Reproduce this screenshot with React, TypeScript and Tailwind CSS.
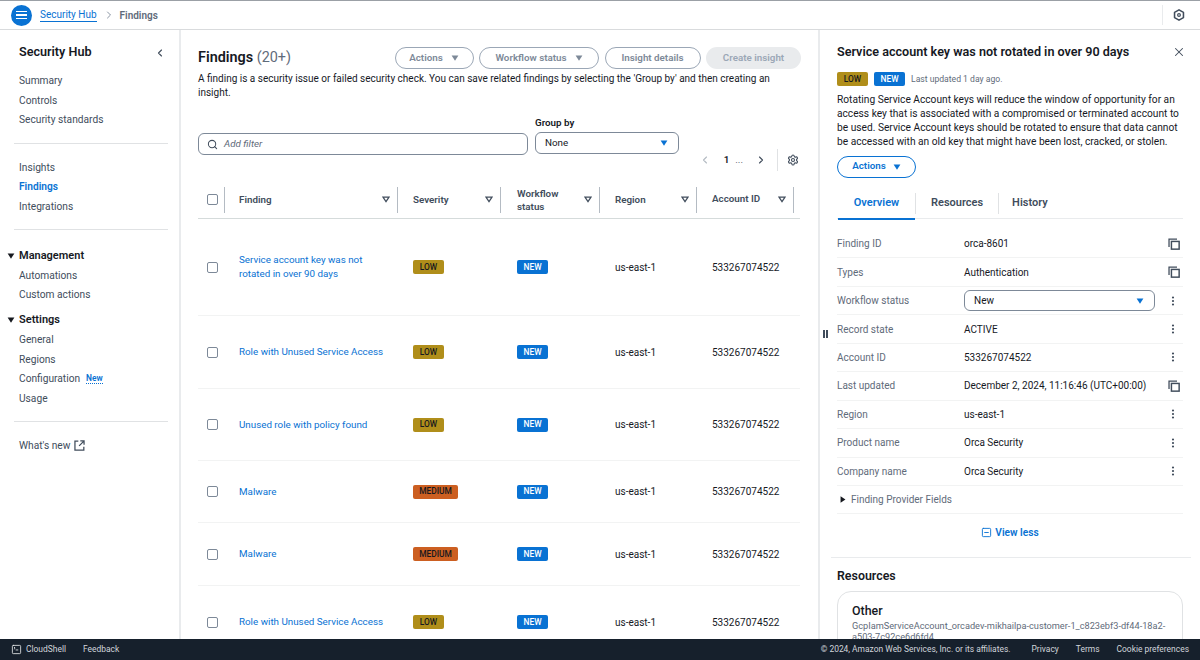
import { ChevronLeft, ChevronRight, EllipsisVertical, Search, Settings, SquareMinus, SquareTerminal, X } from 'lucide-react';

const findings = [
  { title: ['Service account key was not', 'rotated in over 90 days'], severity: 'LOW', height: 'h-[97px]' },
  { title: ['Role with Unused Service Access'], severity: 'LOW', height: 'h-[73px]' },
  { title: ['Unused role with policy found'], severity: 'LOW', height: 'h-[72px]' },
  { title: ['Malware'], severity: 'MEDIUM', height: 'h-[62px]' },
  { title: ['Malware'], severity: 'MEDIUM', height: 'h-[63px]' },
  { title: ['Role with Unused Service Access'], severity: 'LOW', height: 'h-[73px]' },
];

const details = [
  { label: 'Finding ID', value: 'orca-8601', icon: 'copy' },
  { label: 'Types', value: 'Authentication', icon: 'copy' },
  { label: 'Workflow status', value: 'select', icon: 'more' },
  { label: 'Record state', value: 'ACTIVE', icon: 'more' },
  { label: 'Account ID', value: '533267074522', icon: 'more' },
  { label: 'Last updated', value: 'December 2, 2024, 11:16:46 (UTC+00:00)', icon: 'copy' },
  { label: 'Region', value: 'us-east-1', icon: 'more' },
  { label: 'Product name', value: 'Orca Security', icon: 'more' },
  { label: 'Company name', value: 'Orca Security', icon: 'more' },
];

const grid = 'grid grid-cols-[27px_173px_103px_99px_97px_103px]';

function Caret({ className }: { className?: string }) {
  return (
    <svg viewBox="0 0 10 8" className={className} fill="currentColor">
      <path d="M0.5 0.5h9L5 7.5z" />
    </svg>
  );
}

function FilterCaret() {
  return (
    <svg viewBox="0 0 10 8" className="w-[8px] h-[7px] text-[#414d5c]" fill="none" stroke="currentColor" strokeWidth="1.6">
      <path d="M1.2 1h7.6L5 6.6z" />
    </svg>
  );
}

function CopyIcon() {
  return (
    <svg viewBox="0 0 14 14" className="w-[12px] h-[12px]" fill="none" stroke="currentColor" strokeWidth="1.5">
      <path d="M1.2 10.5V1.2h9.3" />
      <rect x="4" y="4" width="9" height="9" strokeWidth="1.7" />
    </svg>
  );
}

function ExternalIcon() {
  return (
    <svg viewBox="0 0 14 14" className="w-[11px] h-[11px]" fill="none" stroke="currentColor" strokeWidth="1.6">
      <path d="M5.5 1.5H1.2v11.3h11.3V8.5" />
      <path d="M8 1.2h4.8V6M12.6 1.4L6.5 7.5" />
    </svg>
  );
}

function NavItem({ label, active }: { label: string; active?: boolean }) {
  return (
    <div className={`h-[19.5px] flex items-center text-[10.2px] ${active ? 'text-[#0972d3] font-semibold' : 'text-[#414d5c]'}`}>
      {label}
    </div>
  );
}

function NavGroup({ label }: { label: string }) {
  return (
    <div className="h-[19.5px] flex items-center text-[11px] font-semibold text-[#16191f]">
      <Caret className="w-[8px] h-[6px] ml-[7px] mr-[4px] text-[#16191f]" />
      {label}
    </div>
  );
}

function Badge({ label }: { label: string }) {
  const colors =
    label === 'LOW'
      ? 'bg-[#b08e1a] text-[#16191f] w-[31px]'
      : label === 'MEDIUM'
        ? 'bg-[#cc5f21] text-[#16191f] w-[45px]'
        : 'bg-[#0972d3] text-white w-[31px]';
  return (
    <span className={`${colors} h-[14px] rounded-[2px] flex items-center justify-center text-[8.4px] font-medium leading-none`}>
      {label}
    </span>
  );
}

function HeaderCell({ label }: { label: string }) {
  const left = label === 'Finding' ? 'pl-[14px]' : label === 'Workflow status' ? 'pl-[16px]' : 'pl-[15px]';
  return (
    <div className={`flex items-center justify-between border-r border-[#b4bbc3] h-[26px] my-auto pr-[7px] ${left} text-[9.8px] leading-[13px] font-semibold text-[#414d5c]`}>
      <span className="w-min min-w-max">
        {label === 'Workflow status' ? (
          <>
            Workflow
            <br />
            status
          </>
        ) : (
          label
        )}
      </span>
      <FilterCaret />
    </div>
  );
}

function PillButton({ label, caret, width }: { label: string; caret?: boolean; width: string }) {
  return (
    <div className={`${width} h-[22px] rounded-full border-[1.5px] border-[#9ba7b6] flex items-center justify-center gap-[8px] text-[9.8px] font-semibold text-[#7d8998]`}>
      {label}
      {caret && <Caret className="w-[8px] h-[6px]" />}
    </div>
  );
}

function Checkbox() {
  return <span className="block w-[11px] h-[11px] rounded-[2px] border-[1.5px] border-[#7d8998] bg-white" />;
}

function Sidebar() {
  return (
    <aside className="w-[181px] shrink-0 border-r-2 border-[#e9ebed] pl-[14px] pr-[11px] pt-[15px]">
      <div className="flex items-center justify-between pl-[5px] h-[15px]">
        <span className="text-[12.6px] font-semibold text-[#16191f]">Security Hub</span>
        <ChevronLeft className="w-[12px] h-[12px] text-[#414d5c] mr-[2px]" strokeWidth={2.2} />
      </div>
      <div className="pl-[5px] mt-[11px]">
        <NavItem label="Summary" />
        <NavItem label="Controls" />
        <NavItem label="Security standards" />
      </div>
      <div className="border-t-[1.5px] border-[#e0e2e4] mt-[13px]" />
      <div className="pl-[5px] mt-[14px]">
        <NavItem label="Insights" />
        <NavItem label="Findings" active />
        <NavItem label="Integrations" />
      </div>
      <div className="border-t-[1.5px] border-[#e0e2e4] mt-[13px]" />
      <div className="-ml-[14px] mt-[16px]">
        <NavGroup label="Management" />
      </div>
      <div className="pl-[5px]">
        <NavItem label="Automations" />
        <NavItem label="Custom actions" />
      </div>
      <div className="-ml-[14px] mt-[6px]">
        <NavGroup label="Settings" />
      </div>
      <div className="pl-[5px]">
        <NavItem label="General" />
        <NavItem label="Regions" />
        <div className="flex items-center gap-[6px]">
          <NavItem label="Configuration" />
          <span className="text-[8.4px] font-semibold text-[#0972d3] border-b border-dotted border-[#0972d3] leading-[10px]">New</span>
        </div>
        <NavItem label="Usage" />
      </div>
      <div className="border-t-[1.5px] border-[#e0e2e4] mt-[13px]" />
      <div className="pl-[5px] mt-[16px] flex items-center gap-[4px] text-[10.2px] text-[#414d5c]">
        What's new
        <ExternalIcon />
      </div>
    </aside>
  );
}

function FindingsTable() {
  return (
    <main className="w-[637px] shrink-0 pl-[17px] pr-[18px] overflow-hidden">
      <div className="flex items-start justify-between pt-[17px]">
        <h1 className="text-[14.4px] leading-[22px] font-semibold text-[#16191f]">
          Findings <span className="font-normal text-[#5f6b7a]">(20+)</span>
        </h1>
        <div className="flex gap-[5.5px] mr-[-1px]">
          <PillButton label="Actions" caret width="w-[79px]" />
          <PillButton label="Workflow status" caret width="w-[120px]" />
          <PillButton label="Insight details" width="w-[96px]" />
          <div className="w-[95px] h-[22px] rounded-full bg-[#e9ebed] flex items-center justify-center text-[9.8px] font-semibold text-[#9ba7b6]">
            Create insight
          </div>
        </div>
      </div>
      <p className="text-[10px] leading-[14px] text-[#16191f] mt-[3px] w-[590px]">
        A finding is a security issue or failed security check. You can save related findings by selecting the 'Group by' and then creating an insight.
      </p>
      <div className="flex items-end gap-[7px] mt-[16px]">
        <div className="w-[330px] h-[22px] mb-[-1px] rounded-[6px] border-[1.5px] border-[#7d8998] flex items-center pl-[8px] gap-[6px] text-[9.8px] italic text-[#5f6b7a]">
          <Search className="w-[11px] h-[11px] text-[#414d5c] not-italic" strokeWidth={2.2} />
          Add filter
        </div>
        <div className="w-[144px]">
          <div className="text-[9.8px] leading-[13px] font-semibold text-[#16191f] mb-[3px]">Group by</div>
          <div className="h-[22px] rounded-[6px] border-[1.5px] border-[#7d8998] flex items-center justify-between pl-[9px] pr-[10px] text-[9.8px] text-[#16191f]">
            None
            <Caret className="w-[8px] h-[6px] text-[#0972d3]" />
          </div>
        </div>
      </div>
      <div className="flex items-center justify-end h-[22px] mt-[-5px] pr-[1px] text-[#16191f]">
        <ChevronLeft className="w-[12px] h-[12px] text-[#b4bbc3]" strokeWidth={2.2} />
        <span className="ml-[13px] text-[9.8px] font-semibold">1</span>
        <span className="ml-[6px] text-[9.8px] text-[#414d5c]">...</span>
        <ChevronRight className="w-[12px] h-[12px] ml-[12px] text-[#414d5c]" strokeWidth={2.2} />
        <span className="h-[22px] border-l border-[#e0e2e4] ml-[10px] mr-[9px]" />
        <Settings className="w-[12px] h-[12px] text-[#414d5c]" strokeWidth={2.2} />
      </div>
      <div className={`${grid} h-[38px] border-b-[1.5px] border-[#d5dbdb] mt-[10px]`}>
        <div className="flex items-center border-r border-[#b4bbc3] h-[26px] my-auto pl-[9px]">
          <Checkbox />
        </div>
        <HeaderCell label="Finding" />
        <HeaderCell label="Severity" />
        <HeaderCell label="Workflow status" />
        <HeaderCell label="Region" />
        <div className="pr-[6px] flex items-center">
          <div className="flex-1 flex items-center justify-between border-r border-[#b4bbc3] h-[26px] pl-[15px] pr-[7px] text-[9.8px] font-semibold text-[#414d5c]">
            Account ID
            <FilterCaret />
          </div>
        </div>
      </div>
      {findings.map((row, i) => (
        <div key={i} className={`${grid} ${row.height} items-center border-b-[1.5px] border-[#f2f3f3] text-[10px]`}>
          <div className="pl-[9px]">
            <Checkbox />
          </div>
          <div className="pl-[14px] leading-[14px] text-[9.8px] text-[#0972d3]">
            {row.title.map((line) => (
              <div key={line}>{line}</div>
            ))}
          </div>
          <div className="pl-[15px]">
            <Badge label={row.severity} />
          </div>
          <div className="pl-[16px]">
            <Badge label="NEW" />
          </div>
          <div className="pl-[15px] text-[#16191f]">us-east-1</div>
          <div className="pl-[15px] text-[#16191f]">533267074522</div>
        </div>
      ))}
    </main>
  );
}

function DetailPanel() {
  return (
    <section className="relative flex-1 border-l-2 border-[#e9ebed] overflow-hidden">
      <span className="absolute left-[3px] top-[300px] flex gap-[1.5px]">
        <span className="w-[1.5px] h-[8px] bg-[#414d5c]" />
        <span className="w-[1.5px] h-[8px] bg-[#414d5c]" />
      </span>
      <div className="pl-[17px] pr-[17px] pt-[14px]">
        <div className="flex items-center justify-between h-[16px]">
          <h2 className="text-[12.6px] font-semibold text-[#16191f]">Service account key was not rotated in over 90 days</h2>
          <X className="w-[14px] h-[14px] text-[#414d5c] mr-[-3px]" strokeWidth={1.8} />
        </div>
        <div className="flex items-center gap-[6px] mt-[12px]">
          <Badge label="LOW" />
          <Badge label="NEW" />
          <span className="text-[8.6px] text-[#5f6b7a]">Last updated 1 day ago.</span>
        </div>
        <p className="text-[10.2px] leading-[14px] text-[#16191f] mt-[6.5px]">
          Rotating Service Account keys will reduce the window of opportunity for an access key that is associated with a compromised or terminated account to be used. Service Account keys should be rotated to ensure that data cannot be accessed with an old key that might have been lost, cracked, or stolen.
        </p>
        <div className="mt-[7px] w-[79px] h-[22px] rounded-full border-[1.5px] border-[#0972d3] flex items-center justify-center gap-[7px] text-[9.8px] font-semibold text-[#0972d3]">
          Actions
          <Caret className="w-[8px] h-[6px]" />
        </div>
        <div className="flex items-stretch h-[30px] mt-[11.5px] border-b-[1.5px] border-[#e9ebed] text-[11px] font-semibold">
          <div className="relative w-[77px] ml-[1px] flex items-center justify-center text-[#0972d3]">
            Overview
            <span className="absolute left-0 right-0 -bottom-[1.5px] h-[2px] bg-[#0972d3]" />
          </div>
          <div className="flex items-center my-[4px] border-l border-[#e0e2e4] px-[15px] text-[#414d5c]">Resources</div>
          <div className="flex items-center my-[4px] border-l border-[#e0e2e4] pl-[13px] text-[#414d5c]">History</div>
        </div>
        <div className="mt-[11px]">
          {details.map((d) => (
            <div key={d.label} className="h-[28.45px] flex items-center border-b border-[#f2f3f3] text-[10px]">
              <span className="w-[127px] shrink-0 text-[#5f6b7a]">{d.label}</span>
              {d.value === 'select' ? (
                <div className="w-[191px] h-[21px] rounded-[6px] border-[1.5px] border-[#7d8998] flex items-center justify-between pl-[9px] pr-[10px] text-[#16191f]">
                  New
                  <Caret className="w-[8px] h-[6px] text-[#0972d3]" />
                </div>
              ) : (
                <span className="text-[#16191f] whitespace-nowrap">{d.value}</span>
              )}
              <span className="ml-auto mr-[3px] text-[#414d5c]">
                {d.icon === 'copy' ? (
                  <CopyIcon />
                ) : (
                  <EllipsisVertical className="w-[12px] h-[12px] mr-[1px]" strokeWidth={2.4} />
                )}
              </span>
            </div>
          ))}
          <div className="h-[28.5px] flex items-center border-b border-[#f2f3f3] text-[10px] text-[#5f6b7a]">
            <svg viewBox="0 0 8 10" className="w-[6px] h-[7px] ml-[3px] mr-[5px] text-[#16191f]" fill="currentColor">
              <path d="M0.5 0.5v9L7.5 5z" />
            </svg>
            Finding Provider Fields
          </div>
        </div>
        <div className="flex items-center justify-center gap-[3px] h-[36px] text-[10.2px] font-semibold text-[#0972d3]">
          <SquareMinus className="w-[11px] h-[11px]" strokeWidth={2} />
          View less
        </div>
      </div>
      <div className="border-t-[1.5px] border-[#e9ebed] ml-[11px] mr-[9px] mt-[7px]" />
      <div className="pl-[17px] pr-[17px]">
        <h3 className="text-[12.4px] font-semibold text-[#16191f] mt-[10px] leading-[16px]">Resources</h3>
        <div className="mt-[7px] h-[70px] rounded-t-[14px] border-[1.5px] border-[#e0e2e4] px-[14px] pt-[11px]">
          <div className="text-[12.4px] leading-[15px] font-medium text-[#16191f]">Other</div>
          <div className="text-[9.2px] leading-[11px] text-[#5f6b7a] mt-[2px]">
            GcpIamServiceAccount_orcadev-mikhailpa-customer-1_c823ebf3-df44-18a2-a503-7c92ce6d6fd4
          </div>
        </div>
      </div>
    </section>
  );
}

export default function App() {
  return (
    <div className="h-[660px] w-[1200px] flex flex-col overflow-hidden bg-white font-['Roboto',sans-serif]">
      <header className="h-[30px] shrink-0 border-t border-[#9ba0a6] border-b border-b-[#d9dbdd] flex items-center pl-[11px]">
        <span className="w-[21px] h-[21px] rounded-full bg-[#0972d3] flex flex-col items-center justify-center gap-[2px]">
          <span className="w-[11px] h-[1.5px] bg-white" />
          <span className="w-[11px] h-[1.5px] bg-white" />
          <span className="w-[11px] h-[1.5px] bg-white" />
        </span>
        <span className="ml-[8px] text-[10px] text-[#0972d3] border-b border-[#0972d3] leading-[12px]">Security Hub</span>
        <ChevronRight className="w-[12px] h-[12px] mx-[6px] text-[#7d8998]" strokeWidth={1.8} />
        <span className="ml-[-1px] text-[10px] font-semibold text-[#5f6b7a]">Findings</span>
        <span className="ml-auto h-[20px] border-l border-[#e9ebed]" />
        <svg viewBox="0 0 14 14" className="w-[12px] h-[12px] ml-[10px] mr-[15px] text-[#414d5c]" fill="none" stroke="currentColor">
          <path d="M7 1l5.2 3v6L7 13l-5.2-3V4z" strokeWidth="1.8" strokeLinejoin="round" />
          <circle cx="7" cy="7" r="1.6" strokeWidth="1.4" />
        </svg>
      </header>
      <div className="flex flex-1 min-h-0">
        <Sidebar />
        <FindingsTable />
        <DetailPanel />
      </div>
      <footer className="h-[21px] shrink-0 bg-[#16202c] flex items-center pl-[11px] pr-[11px] text-[8.45px] text-[#d1d5db]">
        <SquareTerminal className="w-[11px] h-[11px] text-[#e9ebed]" strokeWidth={1.8} />
        <span className="ml-[4px]">CloudShell</span>
        <span className="ml-[17px]">Feedback</span>
        <span className="ml-auto">© 2024, Amazon Web Services, Inc. or its affiliates.</span>
        <span className="ml-[21px]">Privacy</span>
        <span className="ml-[17px]">Terms</span>
        <span className="ml-[17px]">Cookie preferences</span>
      </footer>
    </div>
  );
}
